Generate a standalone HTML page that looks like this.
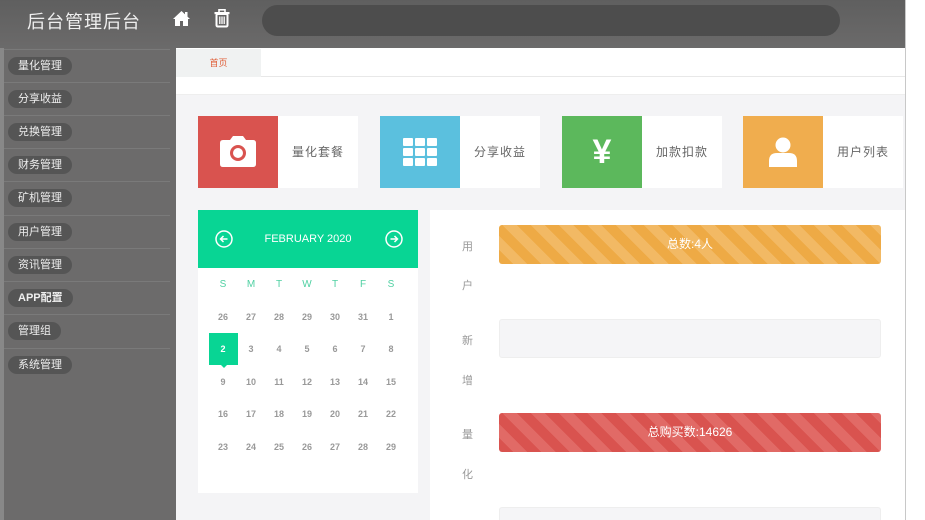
<!DOCTYPE html>
<html><head><meta charset="utf-8"><style>
*{margin:0;padding:0;box-sizing:border-box}
html,body{width:925px;height:520px;overflow:hidden}
body{background:#fff;font-family:"Liberation Sans","Noto Sans CJK SC",sans-serif;position:relative}
.abs{position:absolute}
#page{left:0;top:0;width:906px;height:520px;border-right:1px solid #c8c8c8;background:#f4f4f6}
#hdr{left:0;top:0;width:905px;height:48px;background:linear-gradient(#5f5f5f,#6b6a6a)}
#side{left:0;top:48px;width:176px;height:472px;background:#6c6b6b;border-left:4px solid #888}
.sep{position:absolute;left:0;width:166px;height:1px;background:#7a7a7a}
.pill{position:absolute;left:4px;height:18px;border-radius:9px;background:#555;color:#eee;font-size:11px;line-height:18px;padding:0 10px}
.card{position:absolute;top:116px;height:72px;width:160px;background:#fff}
.card .ic{position:absolute;left:0;top:0;width:80px;height:72px;display:flex;align-items:center;justify-content:center}
.card .tx{position:absolute;left:80px;width:80px;top:0;line-height:72px;text-align:center;font-size:12px;color:#666;letter-spacing:1px}
.cal td{width:28px;height:32.5px;text-align:center;font-size:9px;color:#999;font-weight:bold}
.bar{position:absolute;left:499px;width:382px;height:39px;border-radius:3px;color:#fff;font-size:12px;text-align:center;line-height:39px}
.vl{position:absolute;left:462px;font-size:11px;color:#999}
</style></head><body>
<div id="page" class="abs"></div>
<div id="hdr" class="abs">
 <div class="abs" style="left:27px;top:8px;color:#eee;font-size:18px;letter-spacing:1px">后台管理后台</div>
 <svg class="abs" style="left:172px;top:10px" width="19" height="17" viewBox="0 0 19 17"><path d="M9.5 1 L1 9 L3 9 L3 16 L8 16 L8 11 L11 11 L11 16 L16 16 L16 9 L18 9 Z" fill="#fff"/><rect x="13" y="2" width="2.5" height="5" fill="#fff"/></svg>
 <svg class="abs" style="left:214px;top:9px" width="16" height="19" viewBox="0 0 16 19"><rect x="0.5" y="3" width="15" height="2.2" fill="#fff"/><rect x="5" y="0.8" width="6" height="3" fill="none" stroke="#fff" stroke-width="1.6"/><rect x="2.5" y="5" width="11" height="12.5" rx="1.2" fill="none" stroke="#fff" stroke-width="2"/><path d="M5.8 7.5v7.5M8 7.5v7.5M10.2 7.5v7.5" stroke="#fff" stroke-width="1.3"/></svg>
 <div class="abs" style="left:262px;top:5px;width:578px;height:31px;border-radius:16px;background:#4d4d4d"></div>
</div>
<div id="side" class="abs">
 <div class="sep" style="top:1px"></div>
 <div class="pill" style="top:9px">量化管理</div><div class="sep" style="top:34px"></div>
 <div class="pill" style="top:42px">分享收益</div><div class="sep" style="top:67px"></div>
 <div class="pill" style="top:75px">兑换管理</div><div class="sep" style="top:100px"></div>
 <div class="pill" style="top:108px">财务管理</div><div class="sep" style="top:133px"></div>
 <div class="pill" style="top:141px">矿机管理</div><div class="sep" style="top:167px"></div>
 <div class="pill" style="top:175px">用户管理</div><div class="sep" style="top:200px"></div>
 <div class="pill" style="top:208px">资讯管理</div><div class="sep" style="top:233px"></div>
 <div class="pill" style="top:241px;font-weight:bold">APP配置</div><div class="sep" style="top:266px"></div>
 <div class="pill" style="top:274px">管理组</div><div class="sep" style="top:300px"></div>
 <div class="pill" style="top:308px">系统管理</div>
</div>
<div class="abs" style="left:176px;top:48px;width:729px;height:47px;background:#fff;border-bottom:1px solid #eee"></div>
<div class="abs" style="left:176px;top:49px;width:729px;height:28px;border-bottom:1px solid #e8e8e8"></div>
<div class="abs" style="left:176px;top:49px;width:85px;height:28px;background:#f0f2f2;color:#e0603a;font-size:9px;text-align:center;line-height:28px">首页</div>

<div class="card" style="left:198px"><div class="ic" style="background:#d9534f"><svg width="38" height="32" viewBox="0 0 38 32"><path d="M11 4 L14 0 L24 0 L27 4 L34 4 Q37 4 37 7 L37 28 Q37 31 34 31 L4 31 Q1 31 1 28 L1 7 Q1 4 4 4 Z" fill="#fff"/><circle cx="19" cy="17" r="8" fill="#d9534f"/><circle cx="19" cy="17" r="5" fill="#fff"/></svg></div><div class="tx">量化套餐</div></div>
<div class="card" style="left:380px"><div class="ic" style="background:#5bc0de"><svg width="34" height="28" viewBox="0 0 34 28"><g fill="#fff"><rect x="0" y="0" width="10" height="8" rx="1"/><rect x="12" y="0" width="10" height="8" rx="1"/><rect x="24" y="0" width="10" height="8" rx="1"/><rect x="0" y="10" width="10" height="8" rx="1"/><rect x="12" y="10" width="10" height="8" rx="1"/><rect x="24" y="10" width="10" height="8" rx="1"/><rect x="0" y="20" width="10" height="8" rx="1"/><rect x="12" y="20" width="10" height="8" rx="1"/><rect x="24" y="20" width="10" height="8" rx="1"/></g></svg></div><div class="tx">分享收益</div></div>
<div class="card" style="left:562px"><div class="ic" style="background:#5cb85c"><span style="color:#fff;font-size:34px;font-weight:bold">¥</span></div><div class="tx">加款扣款</div></div>
<div class="card" style="left:743px"><div class="ic" style="background:#f0ad4e"><svg width="28" height="30" viewBox="0 0 28 30"><circle cx="14" cy="8" r="7.5" fill="#fff"/><path d="M0 30 L0 24 Q0 16 8 16 L20 16 Q28 16 28 24 L28 30 Z" fill="#fff"/></svg></div><div class="tx">用户列表</div></div>

<div class="abs" style="left:198px;top:210px;width:220px;height:283px;background:#fff"></div>
<div class="abs" style="left:198px;top:210px;width:220px;height:58px;background:#08d594;color:#fff">
 <svg class="abs" style="left:17px;top:20px" width="18" height="18" viewBox="0 0 18 18"><circle cx="9" cy="9" r="8" fill="none" stroke="#fff" stroke-width="1.5"/><path d="M12.5 9H5.5M8.5 6L5.5 9L8.5 12" fill="none" stroke="#fff" stroke-width="1.5"/></svg>
 <div class="abs" style="left:0;width:220px;top:23px;text-align:center;font-size:11px">FEBRUARY 2020</div>
 <svg class="abs" style="left:187px;top:20px" width="18" height="18" viewBox="0 0 18 18"><circle cx="9" cy="9" r="8" fill="none" stroke="#fff" stroke-width="1.5"/><path d="M5.5 9H12.5M9.5 6L12.5 9L9.5 12" fill="none" stroke="#fff" stroke-width="1.5"/></svg>
</div>
<div class="abs" style="left:209px;top:333px;width:29px;height:32px;background:#08d594"></div>
<div class="abs" style="left:220px;top:364px;width:0;height:0;border:4px solid transparent;border-top-color:#08d594"></div>
<table class="cal abs" style="left:209px;top:268px;border-collapse:collapse">
<tr><td style="color:#4fd0a2;font-weight:normal;font-size:10px">S</td><td style="color:#4fd0a2;font-weight:normal;font-size:10px">M</td><td style="color:#4fd0a2;font-weight:normal;font-size:10px">T</td><td style="color:#4fd0a2;font-weight:normal;font-size:10px">W</td><td style="color:#4fd0a2;font-weight:normal;font-size:10px">T</td><td style="color:#4fd0a2;font-weight:normal;font-size:10px">F</td><td style="color:#4fd0a2;font-weight:normal;font-size:10px">S</td></tr>
<tr><td>26</td><td>27</td><td>28</td><td>29</td><td>30</td><td>31</td><td>1</td></tr>
<tr><td style="color:#fff">2</td><td>3</td><td>4</td><td>5</td><td>6</td><td>7</td><td>8</td></tr>
<tr><td>9</td><td>10</td><td>11</td><td>12</td><td>13</td><td>14</td><td>15</td></tr>
<tr><td>16</td><td>17</td><td>18</td><td>19</td><td>20</td><td>21</td><td>22</td></tr>
<tr><td>23</td><td>24</td><td>25</td><td>26</td><td>27</td><td>28</td><td>29</td></tr>
</table>

<div class="abs" style="left:430px;top:210px;width:475px;height:310px;background:#fff"></div>
<div class="vl" style="top:238px">用</div><div class="vl" style="top:277px">户</div>
<div class="vl" style="top:332px">新</div><div class="vl" style="top:372px">增</div>
<div class="vl" style="top:426px">量</div><div class="vl" style="top:466px">化</div>
<div class="bar" style="top:225px;background:repeating-linear-gradient(45deg,#eeaa45 0 10px,#f2b964 10px 20px)">总数:4人</div>
<div class="bar" style="top:319px;background:#f5f5f7;border:1px solid #eee"></div>
<div class="bar" style="top:413px;background:repeating-linear-gradient(45deg,#d9534f 0 10px,#e16a66 10px 20px)">总购买数:14626</div>
<div class="bar" style="top:507px;height:13px;border-radius:3px 3px 0 0;background:#f5f5f7;border:1px solid #eee;border-bottom:none"></div>
</body></html>
